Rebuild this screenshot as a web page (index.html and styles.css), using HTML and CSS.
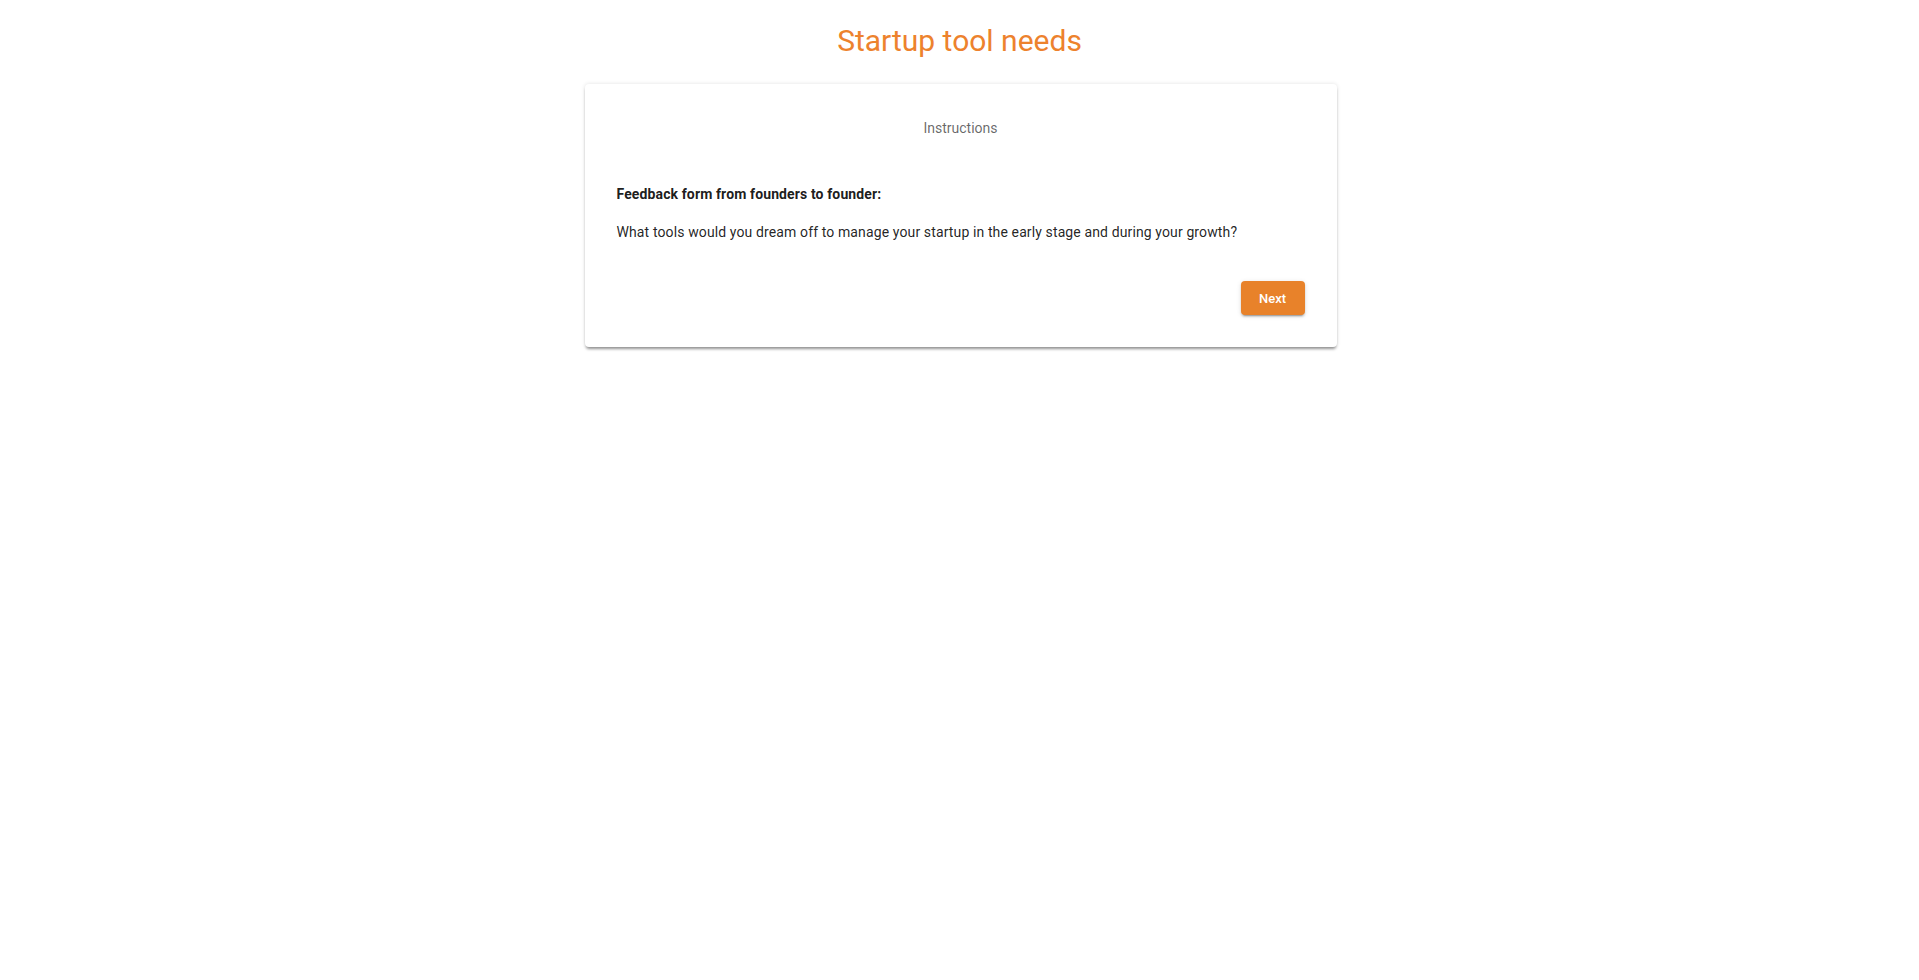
FILE: index.html
```html
<!DOCTYPE html>
<html lang="en">
<head>
    <meta charset="UTF-8">
    <meta name="viewport" content="width=device-width, initial-scale=1.0">
    <title>Startup tool needs</title>
    <link rel="stylesheet" href="styles.css">
</head>
<body>
    <h1 class="title">Startup tool needs</h1>
    <main>
        <section class="card">
            <h2 class="card-title">Instructions</h2>
            <p class="lead">Feedback form from founders to founder:</p>
            <p class="question">What tools would you dream off to manage your startup in the early stage and during your growth?</p>
            <div class="actions">
                <button class="next">Next</button>
            </div>
        </section>
    </main>
</body>
</html>
```

FILE: styles.css
```css
body {
    font-family: Roboto, "Liberation Sans", sans-serif;
    margin: 0;
    padding: 0;
    background: white;
    color: rgba(0, 0, 0, 0.87);
}
.title {
    margin: 23px 0 0;
    font-size: 30px;
    font-weight: 400;
    line-height: 36px;
    text-align: center;
    color: #ed822d;
}
main {
    padding: 25px 0 40px;
}
.card {
    width: 752px;
    margin: 0 auto;
    box-sizing: border-box;
    padding: 32px;
    background: white;
    border-radius: 4px;
    box-shadow: 0 3px 3px -1px rgba(0, 0, 0, 0.4), 0 0 4px 0 rgba(0, 0, 0, 0.12);
    position: relative;
    left: 1px;
}
.card-title {
    margin: 0;
    font-size: 14px;
    font-weight: 400;
    line-height: 24px;
    text-align: center;
    color: rgba(0, 0, 0, 0.6);
}
.lead {
    margin: 42px 0 0;
    font-size: 14px;
    font-weight: 700;
    line-height: 24px;
    letter-spacing: 0.12px;
    color: rgba(0, 0, 0, 0.9);
}
.question {
    margin: 14px 0 0;
    font-size: 14px;
    line-height: 24px;
    letter-spacing: 0.12px;
    color: rgba(0, 0, 0, 0.87);
}
.actions {
    display: flex;
    justify-content: flex-end;
    margin-top: 37px;
}
.next {
    font-family: Roboto, "Liberation Sans", sans-serif;
    font-size: 13px;
    font-weight: 500;
    height: 34px;
    min-width: 64px;
    padding: 0 16px;
    border: none;
    border-radius: 4px;
    background: #e8822a;
    color: white;
    cursor: pointer;
    box-shadow: 0 3px 1px -2px rgba(0, 0, 0, 0.2), 0 2px 2px 0 rgba(0, 0, 0, 0.14), 0 1px 5px 0 rgba(0, 0, 0, 0.12);
}
```
